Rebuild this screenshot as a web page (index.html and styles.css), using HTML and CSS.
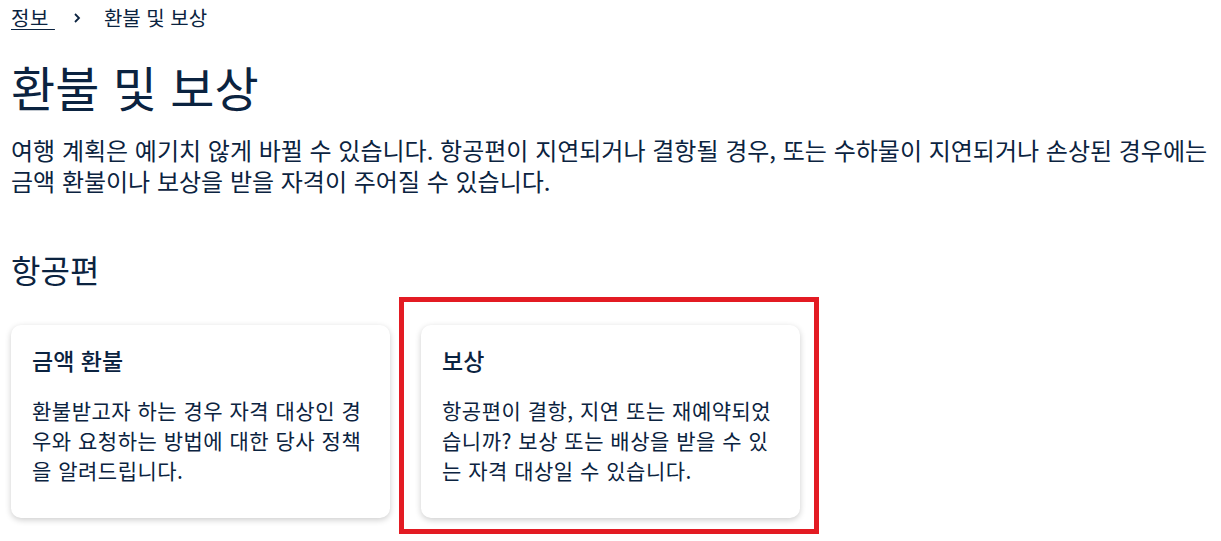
FILE: index.html
```html
<!DOCTYPE html>
<html lang="ko">
<head>
  <meta charset="UTF-8">
  <meta name="viewport" content="width=device-width, initial-scale=1.0">
  <title>환불 및 보상</title>
  <link rel="stylesheet" href="styles.css">
</head>
<body>
  <main class="page">
    <nav class="breadcrumb">
      <a href="#">정보&nbsp;</a>
      <svg class="chevron" width="10" height="12" viewBox="0 0 10 12" aria-hidden="true">
        <polyline points="3,2 7,6 3,10" fill="none" stroke="currentColor" stroke-width="1.8"/>
      </svg>
      <span>환불 및 보상</span>
    </nav>

    <h1>환불 및 보상</h1>
    <p class="intro">여행 계획은 예기치 않게 바뀔 수 있습니다. 항공편이 지연되거나 결항될 경우, 또는 수하물이 지연되거나 손상된 경우에는 금액 환불이나 보상을 받을 자격이 주어질 수 있습니다.</p>

    <h2>항공편</h2>
    <div class="cards">
      <div class="card">
        <h3>금액 환불</h3>
        <p>환불받고자 하는 경우 자격 대상인 경우와 요청하는 방법에 대한 당사 정책을 알려드립니다.</p>
      </div>
      <div class="card marked">
        <h3>보상</h3>
        <p>항공편이 결항, 지연 또는 재예약되었습니까? 보상 또는 배상을 받을 수 있는 자격 대상일 수 있습니다.</p>
      </div>
    </div>
  </main>
</body>
</html>
```

FILE: styles.css
```css
body {
  font-family: "Noto Sans CJK KR", "Noto Sans", sans-serif;
  margin: 0;
  padding: 0;
  background: #fff;
  color: #0b2340;
}
.page {
  padding: 4px 2px 30px 11px;
}
.breadcrumb {
  display: flex;
  align-items: center;
  font-size: 20px;
  line-height: 28px;
}
.breadcrumb a {
  color: #0b2340;
  text-decoration: underline;
  text-decoration-thickness: 1px;
  text-underline-offset: 3px;
  letter-spacing: 0.5px;
}
.chevron {
  margin: 0 22px 0 17px;
}
h1 {
  font-size: 48px;
  font-weight: 400;
  line-height: 60px;
  margin: 24px 0 18px;
}
.intro {
  font-size: 24px;
  line-height: 31px;
  margin: 0;
}
h2 {
  font-size: 32px;
  font-weight: 400;
  line-height: 40px;
  margin: 53px 0 36px;
}
.cards {
  display: flex;
  gap: 31px;
}
.card {
  position: relative;
  width: 379px;
  box-sizing: border-box;
  padding: 20px 21px 33px;
  background: #fff;
  border-radius: 10px;
  box-shadow: 0 2px 6px rgba(0,0,0,0.2);
}
.card h3 {
  font-size: 23px;
  font-weight: 500;
  line-height: 30px;
  margin: 0 0 20px;
}
.card p {
  font-size: 21px;
  line-height: 30px;
  letter-spacing: 0.5px;
  margin: 0;
}
.card.marked::after {
  content: "";
  position: absolute;
  left: -22px;
  top: -28px;
  right: -19px;
  bottom: -16px;
  border: 5px solid #e31b23;
}
```
